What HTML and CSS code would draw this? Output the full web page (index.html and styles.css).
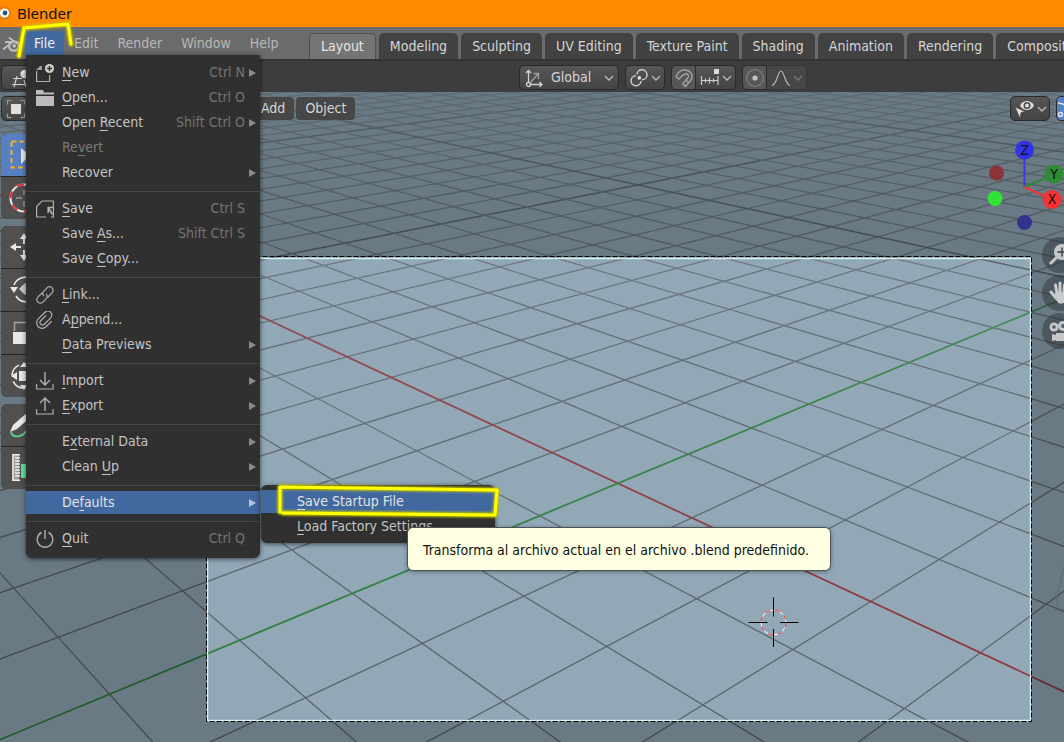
FILE: index.html
```html
<!DOCTYPE html>
<html lang="en">
<head>
<meta charset="utf-8">
<meta name="viewport" content="width=device-width, initial-scale=1">
<title>Blender</title>
<link rel="stylesheet" href="styles.css">
</head>
<body>
<div class="app">
  <header class="titlebar">
    <svg class="title-logo" width="11" height="18" viewBox="0 0 11 18"><circle cx="4" cy="9" r="7" fill="#e87d0d"/><circle cx="4.500" cy="9" r="4.600" fill="#fff"/><circle cx="5" cy="9" r="2.400" fill="#265787"/></svg>
    <span>Blender</span>
  </header>

  <div class="topbar">
    <nav class="menubar" aria-label="Main menu">
      <svg class="logo" width="18" height="18" viewBox="0 0 18 18" fill="none" stroke="#bdbdbd"><ellipse cx="11" cy="11" rx="5" ry="4.600" stroke-width="2.400"/><circle cx="11.200" cy="10.800" r="1.900" fill="#bdbdbd" stroke="none"/><path d="M0 14.500 9.500 7H2M6 2.500 14 8.500M4 7h7" stroke-width="2"/></svg>
      <button class="menu-btn active">File</button>
      <button class="menu-btn">Edit</button>
      <button class="menu-btn">Render</button>
      <button class="menu-btn">Window</button>
      <button class="menu-btn">Help</button>
    </nav>
    <div class="tabs" role="tablist">
      <button class="tab selected" role="tab">Layout</button>
      <button class="tab" role="tab">Modeling</button>
      <button class="tab" role="tab">Sculpting</button>
      <button class="tab" role="tab">UV Editing</button>
      <button class="tab" role="tab">Texture Paint</button>
      <button class="tab" role="tab">Shading</button>
      <button class="tab" role="tab">Animation</button>
      <button class="tab" role="tab">Rendering</button>
      <button class="tab" role="tab">Compositing</button>
    </div>
  </div>

  <div class="toolheader">
    <button class="ctl editor-type" aria-label="Editor type"><svg width="20" height="20" viewBox="0 0 20 20" fill="none" stroke="#cfcfcf" stroke-width="1.200"><path d="M2 10.500h9M1 16.500h17M6 8 3 19M13 12l2 7"/><circle cx="13.500" cy="6" r="4.200" fill="#d8d8d8" stroke="none"/><path d="M11.500 5.500a2.500 2.500 0 0 1 2-2" stroke="#fff"/></svg></button>
    <div class="tool-controls">
      <button class="ctl orientation">
        <svg width="20" height="20" viewBox="0 0 20 20" fill="none" stroke="#d4d4d4" stroke-width="1.300"><path d="M4.500 14V2.500M2 5l2.500-2.500L7 5M6.500 16.500H18M15.500 14l2.500 2.500-2.500 2.500"/><circle cx="4.500" cy="16.500" r="2"/><path d="M6 15l8-9M9.500 5.500H14.500V11" stroke="#a0a0a0"/></svg>
        <span class="grow">Global</span>
        <svg class="chev" width="10" height="6" viewBox="0 0 10 6"><path d="M1 1l4 4 4-4"/></svg>
      </button>
      <button class="ctl" aria-label="Pivot point">
        <svg width="20" height="20" viewBox="0 0 20 20" fill="none" stroke="#d4d4d4" stroke-width="1.400"><path d="M8 6.500a5 5 0 1 1 5 5.300M12 13a5 5 0 1 1-5-5.300"/><circle cx="10.300" cy="9.800" r="1.900" fill="#e0e0e0" stroke="none"/></svg>
        <svg class="chev" width="10" height="6" viewBox="0 0 10 6"><path d="M1 1l4 4 4-4"/></svg>
      </button>
      <div class="joined">
        <button class="ctl on" aria-label="Snap"><svg width="20" height="20" viewBox="0 0 20 20" fill="none" stroke="#a6a6a6" stroke-width="1.300"><path d="M2 8.500C4 4 8 1.500 12 2c5 .5 7.500 6 5 10l-5.500 6.500-2.800-2.600 5.300-6.100c1.500-2-.5-5-3.300-3.700C8.500 7 7 8.500 5 11z"/><path d="M14.500 14.500l-2.500-2.500"/></svg></button>
        <button class="ctl" aria-label="Snapping mode"><svg width="20" height="20" viewBox="0 0 20 20" fill="none" stroke="#cfcfcf" stroke-width="1.200"><path d="M1.500 8v9M1.500 12.500H18M18 8v9M5.500 10.500v4M9.500 9.500v6M13.500 10.500v4"/><path d="M14 1h5v5h-5z" fill="#dcdcdc" stroke="none"/></svg><svg class="chev" width="10" height="6" viewBox="0 0 10 6"><path d="M1 1l4 4 4-4"/></svg></button>
      </div>
      <div class="joined">
        <button class="ctl on" aria-label="Proportional editing"><svg width="20" height="20" viewBox="0 0 20 20" fill="none"><circle cx="10" cy="10" r="8.300" stroke="#7d7d7d" stroke-width="1.300"/><circle cx="10" cy="10" r="2.600" fill="#c4c4c4"/></svg></button>
        <button class="ctl faded" aria-label="Falloff"><svg width="20" height="20" viewBox="0 0 20 20" fill="none" stroke="#b4b4b4" stroke-width="1.200"><path d="M1 17.500C6.500 16 6.500 3 10 3s3.500 13 9 14.500"/></svg><svg class="chev" width="10" height="6" viewBox="0 0 10 6"><path d="M1 1l4 4 4-4"/></svg></button>
      </div>
    </div>
  </div>

  <main class="viewport">
    <svg class="scene" viewBox="0 92 1064 650" preserveAspectRatio="xMinYMin slice" aria-hidden="true">
      <defs>
        <linearGradient id="fade" gradientUnits="userSpaceOnUse" x1="0" y1="92" x2="0" y2="742">
          <stop offset="0" stop-color="#444"/><stop offset=".15" stop-color="#888"/><stop offset=".4" stop-color="#bbb"/><stop offset="1" stop-color="#eee"/>
        </linearGradient>
        <mask id="depth" maskUnits="userSpaceOnUse" x="0" y="92" width="1064" height="650"><rect y="92" width="1064" height="650" fill="url(#fade)"/></mask>
      </defs>
      <rect class="sky" y="92" width="1064" height="650"/>
      <g id="grid" mask="url(#depth)"></g>
      <path class="faint" d="M1064 566l-6 26-1 16 7 2"/>
      <path class="passepartout" fill-rule="evenodd" d="M0 92H1064V742H0zM207 257H1031V722H207z"/>
      <rect class="frame-light" x="207.500" y="258.500" width="823" height="462"/>
      <rect class="frame-dark" x="206.500" y="256.500" width="825" height="465"/>
      <circle cx="773.500" cy="622.500" r="12.500" class="cur-white"/>
      <circle cx="773.500" cy="622.500" r="12.500" class="cur-red"/>
      <path class="cur-cross" d="M748.500 622.500h19M780 622.500h18.500M773.500 597.500v19M773.500 629v18"/>
    </svg>

    <div class="view-header">
      <button class="ctl mode" aria-label="Object mode"><svg width="20" height="20" viewBox="0 0 20 20" fill="none" stroke="#9f9f9f" stroke-width="1.200"><path d="M1.500 5.500v-4h4M14.500 1.500h4v4M18.500 14.500v4h-4M5.500 18.500h-4v-4"/><path d="M5 5h10v10H5z" fill="#e0e0e0" stroke="none"/></svg></button>
      <div class="view-menus">
        <button class="flat">Add</button>
        <button class="flat">Object</button>
      </div>
      <div class="view-right">
        <button class="ctl" aria-label="Visibility"><svg width="22" height="20" viewBox="0 0 22 20"><path d="M6 6.500C8 3 10.500 2 13 2s5 1 7 4.500C18 10 15.500 11 13 11S8 10 6 6.500z" fill="#e0e0e0"/><circle cx="13" cy="6.500" r="3.500" fill="#484848"/><circle cx="13" cy="6.500" r="2" fill="#e0e0e0"/><path d="M1 8l10 4.500-4 1L6 19z" fill="#e0e0e0" stroke="#484848" stroke-width=".6"/></svg><svg class="chev" width="10" height="6" viewBox="0 0 10 6"><path d="M1 1l4 4 4-4"/></svg></button>
        <button class="ctl gizmo-toggle" aria-label="Gizmos"><svg width="20" height="20" viewBox="0 0 20 20" fill="none" stroke="#dfe7f5" stroke-width="1.500"><path d="M1 4c6 0 12 5 13 12"/><circle cx="3.500" cy="15.500" r="2"/></svg></button>
      </div>
    </div>

    <div class="toolbar">
      <div class="tool-group">
        <button class="tool picked" aria-label="Select box"><svg width="32" height="32" viewBox="0 0 32 32"><path d="M5.500 3v25.500H30M5.500 2.500H30" fill="none" stroke="#f2ac2e" stroke-width="2" stroke-dasharray="5 3"/><path d="M15 9l12 10-7 1-5 5z" fill="#e8e8e8"/></svg></button>
        <button class="tool" aria-label="Cursor"><svg width="32" height="32" viewBox="0 0 32 32" fill="none"><circle cx="18" cy="16" r="13.500" stroke="#e8e8e8" stroke-width="2"/><circle cx="18" cy="16" r="13.500" stroke="#e03030" stroke-width="2" stroke-dasharray="7 7"/><path d="M10 16h6M20 16h8M18 8v5M18 19v6" stroke="#999" stroke-width="1.500"/></svg></button>
      </div>
      <div class="tool-group">
        <button class="tool" aria-label="Move"><svg width="32" height="32" viewBox="0 0 32 32" fill="#e8e8e8"><path d="M18 2l4 6h-8zM18 30l4-6h-8zM4 16l6-4v8zM10 15h5v2h-5zM17 8h2v5h-2zM17 19h2v5h-2z"/></svg></button>
        <button class="tool" aria-label="Rotate"><svg width="32" height="32" viewBox="0 0 32 32" fill="none" stroke="#e8e8e8" stroke-width="1.600"><path d="M8 11a12 12 0 0 1 20-4M10 22a12 12 0 0 0 20 1"/><path d="M4 13h8l-4 6z" fill="#e8e8e8" stroke="none"/><path d="M19 9l6 6-6 6-6-6z" fill="#ccc" stroke="none"/></svg></button>
        <button class="tool" aria-label="Scale"><svg width="32" height="32" viewBox="0 0 32 32"><path d="M8.500 14V5.500H28V24H22" fill="none" stroke="#a5a5a5" stroke-width="1.500"/><path d="M7 15h13v12H7z" fill="#e8e8e8"/></svg></button>
        <button class="tool" aria-label="Transform"><svg width="32" height="32" viewBox="0 0 32 32" fill="#e8e8e8"><circle cx="18" cy="16" r="12" fill="none" stroke="#e8e8e8" stroke-width="1.600" stroke-dasharray="13 6"/><path d="M13 11h10v10H13zM5 16l6-4v8zM18 2l4 5h-8zM18 30l4-5h-8z"/></svg></button>
      </div>
      <div class="tool-group">
        <button class="tool" aria-label="Annotate"><svg width="32" height="32" viewBox="0 0 32 32"><path d="M5 23c1 6 11 6 15-1" fill="none" stroke="#5fd490" stroke-width="1.800"/><path d="M4 23l3-7L22 3l4 4L11 20z" fill="#e8e8e8"/></svg></button>
        <button class="tool" aria-label="Measure"><svg width="32" height="32" viewBox="0 0 32 32"><path d="M15 12h12v14H15z" fill="#5fe09a"/><path d="M7 2h6v27H7z" fill="#999"/><path d="M7 2v27M7 2.800h7M9 6h5M9 9h5M9 12h5M9 15h5M9 18h5M9 21h5M9 24h5M7 28.200h7" stroke="#f0f0f0" stroke-width="1.600"/></svg></button>
      </div>
    </div>

    <svg class="gizmo" width="84" height="100" viewBox="980 136 84 100">
      <g stroke-width="2"><path d="M1024.500 187V158" stroke="#3a3aea"/><path d="M1024.500 187l26-11" stroke="#2f8a35"/><path d="M1024.500 187l24 11" stroke="#f23434"/></g>
      <circle cx="996.500" cy="173" r="7.500" fill="#8c3337"/><circle cx="995" cy="198.500" r="7.500" fill="#2fe436"/><circle cx="1024.500" cy="222.500" r="7.500" fill="#33338d"/>
      <circle cx="1024.500" cy="150" r="9.500" fill="#3333e6"/><circle cx="1054" cy="174" r="9.500" fill="#2f8a35"/><circle cx="1052" cy="199.500" r="9.500" fill="#f23434"/>
      <g class="axis"><text x="1024.500" y="155">Z</text><text x="1054" y="179">Y</text><text x="1052" y="204">X</text></g>
    </svg>
    <div class="nav-buttons">
      <button aria-label="Zoom"><svg width="36" height="36" viewBox="0 0 36 36"><circle cx="20" cy="15" r="8" fill="#c4c8cb"/><path d="M8 27l7-7" stroke="#c4c8cb" stroke-width="3"/><path d="M15.500 15h9M20 10.500v9" stroke="#50595f" stroke-width="1.800"/></svg></button>
      <button aria-label="Pan"><svg width="36" height="36" viewBox="0 0 36 36" fill="none" stroke="#c8cccf" stroke-width="3" stroke-linecap="round"><path d="M9 17l5 6M13.500 10l2 11M18 8v12M22.500 10l-1 11M26 14l-2 8"/><path d="M14 18h10v6l-3 4h-4l-4-5z" fill="#c8cccf" stroke-width="1"/></svg></button>
      <button aria-label="Camera view"><svg width="36" height="36" viewBox="0 0 36 36"><g fill="#c4c8cb"><circle cx="12" cy="14" r="4.500"/><circle cx="21" cy="13" r="5"/><path d="M14 20h12v8H14zM10 21l4 1v5l-4 1z"/></g><circle cx="12" cy="14" r="1.800" fill="#555e65"/><circle cx="21" cy="13" r="2" fill="#555e65"/></svg></button>
    </div>
  </main>

  <div class="popup file-menu" role="menu">
    <button class="item" role="menuitem"><svg class="ico" viewBox="0 0 18 18"><path d="M.600 7v10.500h13V11" /><path d="M0 6l4-4h2v4z" fill="#999" stroke="none"/><circle cx="13.500" cy="4.500" r="4.500" fill="#d0d0d0" stroke="none"/><path d="M11 4.500h5M13.500 2v5" stroke="#303030" stroke-width="1.400"/></svg><span class="label"><u>N</u>ew</span><kbd>Ctrl N</kbd><i class="sub"></i></button>
    <button class="item" role="menuitem"><svg class="ico" viewBox="0 0 18 18"><path d="M0 1h7l1 2.500h10v2H0zM0 7h18v10H0z" fill="#bcbcbc" stroke="none"/></svg><span class="label"><u>O</u>pen...</span><kbd>Ctrl O</kbd></button>
    <button class="item" role="menuitem"><span class="label">Open <u>R</u>ecent</span><kbd>Shift Ctrl O</kbd><i class="sub"></i></button>
    <button class="item off" role="menuitem"><span class="label">Re<u>v</u>ert</span></button>
    <button class="item" role="menuitem"><span class="label">Recover</span><i class="sub"></i></button>
    <hr>
    <button class="item" role="menuitem"><svg class="ico" viewBox="0 0 18 18"><path d="M10 17H.600V6.500L6 1h11.400v16H15"/><path d="M11.500 7.500h5.500M12.200 7v6M12.500 8 16.500 14.500" stroke-width="1.600"/></svg><span class="label"><u>S</u>ave</span><kbd>Ctrl S</kbd></button>
    <button class="item" role="menuitem"><span class="label">Save <u>A</u>s...</span><kbd>Shift Ctrl S</kbd></button>
    <button class="item" role="menuitem"><span class="label">Save <u>C</u>opy...</span></button>
    <hr>
    <button class="item" role="menuitem"><svg class="ico" viewBox="0 0 18 18"><g transform="rotate(-45 9 9)"><path d="M9 5.500H2.500a3.500 3.500 0 0 0 0 7H7a3.500 3.500 0 0 0 3.500-3.500"/><path d="M9 12.500h6.500a3.500 3.500 0 0 0 0-7H11A3.500 3.500 0 0 0 7.500 9"/></g></svg><span class="label"><u>L</u>ink...</span></button>
    <button class="item" role="menuitem"><svg class="ico" viewBox="0 0 18 18"><g transform="rotate(45 9 9)"><path d="M6.500 5v7.500a2.500 2.500 0 0 0 5 0V3.500a4 4 0 0 0-8 0v9.500a5.500 5.500 0 0 0 11 0V5"/></g></svg><span class="label">A<u>p</u>pend...</span></button>
    <button class="item" role="menuitem"><span class="label"><u>D</u>ata Previews</span><i class="sub"></i></button>
    <hr>
    <button class="item" role="menuitem"><svg class="ico" viewBox="0 0 18 18"><path d="M.600 12v5h16.500v-5"/><path d="M9 0v13M4 8l5 5 5-5" stroke-width="1.400"/></svg><span class="label"><u>I</u>mport</span><i class="sub"></i></button>
    <button class="item" role="menuitem"><svg class="ico" viewBox="0 0 18 18"><path d="M.600 12v5h16.500v-5"/><path d="M9 14V1M4 6l5-5 5 5" stroke-width="1.400"/></svg><span class="label"><u>E</u>xport</span><i class="sub"></i></button>
    <hr>
    <button class="item" role="menuitem"><span class="label">E<u>x</u>ternal Data</span><i class="sub"></i></button>
    <button class="item" role="menuitem"><span class="label">Clean <u>U</u>p</span><i class="sub"></i></button>
    <hr>
    <button class="item hot" role="menuitem"><span class="label">De<u>f</u>aults</span><i class="sub"></i></button>
    <hr>
    <button class="item" role="menuitem"><svg class="ico" viewBox="0 0 18 18"><path d="M5.500 2.500a7.800 7.800 0 1 0 7 0M9 0v9" stroke-width="1.400"/></svg><span class="label"><u>Q</u>uit</span><kbd>Ctrl Q</kbd></button>
  </div>

  <div class="popup defaults-menu" role="menu">
    <button class="item hot" role="menuitem"><span class="label"><u>S</u>ave Startup File</span></button>
    <button class="item" role="menuitem"><span class="label"><u>L</u>oad Factory Settings</span></button>
  </div>

  <div class="tooltip" role="tooltip">Transforma al archivo actual en el archivo .blend predefinido.</div>

  <svg class="marks" width="520" height="530" viewBox="0 0 520 530" aria-hidden="true">
    <g class="glow"><path d="M19 56L24 28L68 24L71 44"/><path d="M280 512V487L497 490L495 515L283 513"/></g>
    <g class="ink"><path d="M19 56L24 28L68 24L71 44"/><path d="M280 512V487L497 490L495 515L283 513"/></g>
  </svg>
</div>
<script src="grid.js"></script>
</body>
</html>
```
FILE: styles.css
```css
* { box-sizing: border-box; }
body {
  margin: 0;
  font: 14px/17px "DejaVu Sans Condensed", "DejaVu Sans", sans-serif;
  color: #d6d6d6;
  background: #3d3d3d;
}
button {
  font: inherit;
  color: inherit;
  border: 0;
  padding: 0;
  background: none;
  white-space: nowrap;
}
svg { display: block; flex: none; }

.app {
  position: relative;
  display: flex;
  flex-direction: column;
  height: 100vh;
  overflow: hidden;
}
.titlebar {
  display: flex;
  align-items: center;
  gap: 6px;
  flex: none;
  height: 27px;
  padding-bottom: 2px;
  background: #ff8c00;
  color: #111;
  font: 15px/20px "Noto Sans", sans-serif;
}

.topbar {
  display: flex;
  flex: none;
  height: 34px;
  background: #6b6b6b;
  border-bottom: 2px solid #333;
}
.menubar {
  display: flex;
  gap: 1px;
  flex: 0 0 309px;
  padding: 4px 0 0 3px;
}
.logo { margin: 4px 3px 0 0; }
.menu-btn {
  height: 24px;
  padding: 0 9px;
  border-radius: 4px 4px 0 0;
  color: #b8b8b8;
}
.menu-btn.active { background: #4169a0; color: #f0f0f0; }
.tabs {
  display: flex;
  align-items: flex-end;
  gap: 3px;
  min-width: 0;
  flex: 1;
  overflow: hidden;
}
.tab {
  flex: none;
  height: 26px;
  padding: 0 11px;
  background: #424242;
  border-radius: 5px 5px 0 0;
}
.tab.selected {
  background: #757575;
  border: 1px solid #505050;
  border-bottom: 0;
  color: #e6e6e6;
}

.toolheader {
  display: flex;
  align-items: center;
  flex: none;
  height: 31px;
  padding: 2px 1px 0;
  background: #3d3d3d;
}
.tool-controls {
  display: flex;
  gap: 6px;
  margin-left: 478px;
}
.ctl {
  display: flex;
  align-items: center;
  justify-content: center;
  gap: 2px;
  width: 40px;
  height: 25px;
  border: 1px solid #2a2a2a;
  border-radius: 5px;
  background: linear-gradient(#565656, #444);
}
.orientation { width: 100px; padding: 0 4px; gap: 7px; }
.grow { flex: 1; text-align: left; }
.chev { fill: none; stroke: #b4b4b4; stroke-width: 1.5; }
.joined { display: flex; }
.joined .ctl:first-child { width: 25px; border-radius: 5px 0 0 5px; }
.joined .ctl:last-child { border-left: 0; border-radius: 0 5px 5px 0; }
.on { background: #575757; }
.faded { background: #474747; border-color: #353535; }
.faded .chev { stroke: #777; }

.viewport {
  position: relative;
  flex: 1;
  min-height: 0;
  overflow: hidden;
}
.scene { position: absolute; inset: 0; width: 100%; height: 100%; }
.sky { fill: #92a8b7; }
.minor { stroke: #575d62; stroke-width: 1.3; }
.major { stroke: #373c40; stroke-width: 1.5; }
.axis-x { stroke: #8f2a30; stroke-width: 1.8; }
.axis-y { stroke: #247c2e; stroke-width: 1.8; }
.faint { fill: none; stroke: #7f8f9b; }
.passepartout { fill: rgba(0, 0, 0, .27); }
.frame-light { fill: none; stroke: #d8f4f4; stroke-width: 1.4; }
.frame-dark { fill: none; stroke: #000; stroke-dasharray: 5 2; }
.cur-white { fill: none; stroke: #fff; }
.cur-red { fill: none; stroke: #f22; stroke-dasharray: 5 5; }
.cur-cross { fill: none; stroke: #000; }

.view-header {
  position: relative;
  display: flex;
  height: 42px;
  padding: 4px 0 0 1px;
}
.mode { width: 29px; }
.view-menus {
  display: flex;
  gap: 2px;
  margin: 1px 0 0 222px;
}
.flat {
  height: 23px;
  padding: 0 9px;
  border-radius: 4px;
  background: #474747;
}
.view-right {
  display: flex;
  gap: 6px;
  margin: 0 -18px 0 auto;
}
.view-right .ctl { gap: 1px; }
.view-right .gizmo-toggle {
  width: 26px;
  background: #5680c2;
  justify-content: flex-start;
}

.toolbar {
  position: relative;
  display: flex;
  flex-direction: column;
  gap: 7px;
  width: 42px;
  padding-left: 1px;
}
.tool-group {
  display: flex;
  flex-direction: column;
  gap: 1px;
  border-radius: 6px;
  background: #262626;
  overflow: hidden;
}
.tool {
  display: grid;
  place-items: center;
  height: 42px;
  background: #505050;
}
.tool.picked { background: #5680c2; }

.gizmo { position: absolute; top: 44px; right: 0; }
.axis { fill: #111; text-anchor: middle; }
.nav-buttons {
  position: absolute;
  top: 145px;
  right: -14px;
  display: flex;
  flex-direction: column;
  gap: 2px;
}
.nav-buttons button {
  width: 36px;
  height: 36px;
  border-radius: 50%;
  background: rgba(40, 44, 48, .45);
}

.popup {
  position: absolute;
  display: flex;
  flex-direction: column;
  width: 234px;
  background: #303030;
  color: #c4c4c4;
  box-shadow: 0 1px 5px rgba(0, 0, 0, .6);
}
.file-menu {
  top: 55px;
  left: 26px;
  padding: 5px 0 7px;
  border-radius: 0 0 6px 6px;
}
.defaults-menu {
  top: 485px;
  left: 261px;
  padding: 4px 0;
  border-radius: 6px;
}
.item {
  display: flex;
  align-items: center;
  height: 23px;
  margin: 1px 0;
  padding: 0 15px 0 36px;
  text-align: left;
}
.label { flex: 1; }
.off { color: #7b7b7b; }
.hot { background: #4169a0; color: #e4e4e4; }
.item u { text-underline-offset: 3px; }
.item kbd { font: inherit; color: #747474; }
.ico {
  width: 18px;
  height: 18px;
  margin: 0 8px 0 -26px;
  fill: none;
  stroke: #b0b0b0;
  stroke-width: 1.2;
}
.sub {
  width: 7px;
  margin: 0 -11px 0 4px;
  border: solid transparent;
  border-width: 4px 0 4px 7px;
  border-left-color: #8a8a8a;
}
.hot .sub { border-left-color: #b4c2d6; }
.popup hr {
  width: 100%;
  height: 1px;
  margin: 6px 0 4px;
  border: 0;
  background: #454545;
}

.tooltip {
  position: absolute;
  top: 527px;
  left: 407px;
  padding: 14px 21px 11px 15px;
  border: 1px solid #4c5358;
  border-radius: 6px;
  background: #ffffe1;
  color: #111;
  white-space: nowrap;
  box-shadow: 0 1px 4px rgba(0, 0, 0, .35);
}
.marks {
  position: absolute;
  top: 0;
  left: 0;
  fill: none;
  stroke-linejoin: round;
  stroke-linecap: round;
  pointer-events: none;
}
.glow { stroke: #c8c800; stroke-width: 5; filter: blur(1px); }
.ink { stroke: #ff0; stroke-width: 3; }
```
FILE: grid.js
```js
// Projects the floor plane into the camera view and draws its grid lines.
const SVG_NS = "http://www.w3.org/2000/svg";
const NEAR = 0.2;
const FAR = 400;

function depth(x, y) {
  return 1 - 0.05767 * x + 0.05438 * y;
}

function project(x, y) {
  const w = depth(x, y);
  return [
    (617.9 + 34.07 * x + 107.64 * y) / w,
    (483.3 + 4.7 * x - 4.43 * y) / w,
  ];
}

function addLine(parent, from, to, name) {
  const line = document.createElementNS(SVG_NS, "line");
  line.setAttribute("x1", from[0].toFixed(1));
  line.setAttribute("y1", from[1].toFixed(1));
  line.setAttribute("x2", to[0].toFixed(1));
  line.setAttribute("y2", to[1].toFixed(1));
  line.setAttribute("class", name);
  parent.appendChild(line);
}

const grid = document.getElementById("grid");
const kind = (k) => (k % 10 === 0 ? "major" : "minor");

for (let k = -70; k <= 24; k++) {
  if (k === 0) continue;
  const y = (NEAR - 1 + 0.05767 * k) / 0.05438;
  addLine(grid, project(k, y), project(k, FAR), kind(k));
}
for (let k = -24; k <= 70; k++) {
  if (k === 0) continue;
  const x = (1 + 0.05438 * k - NEAR) / 0.05767;
  addLine(grid, project(x, k), project(-FAR, k), kind(k));
}
addLine(grid, project(13, 0), project(-FAR, 0), "axis-x");
addLine(grid, project(0, -14), project(0, FAR), "axis-y");
```
